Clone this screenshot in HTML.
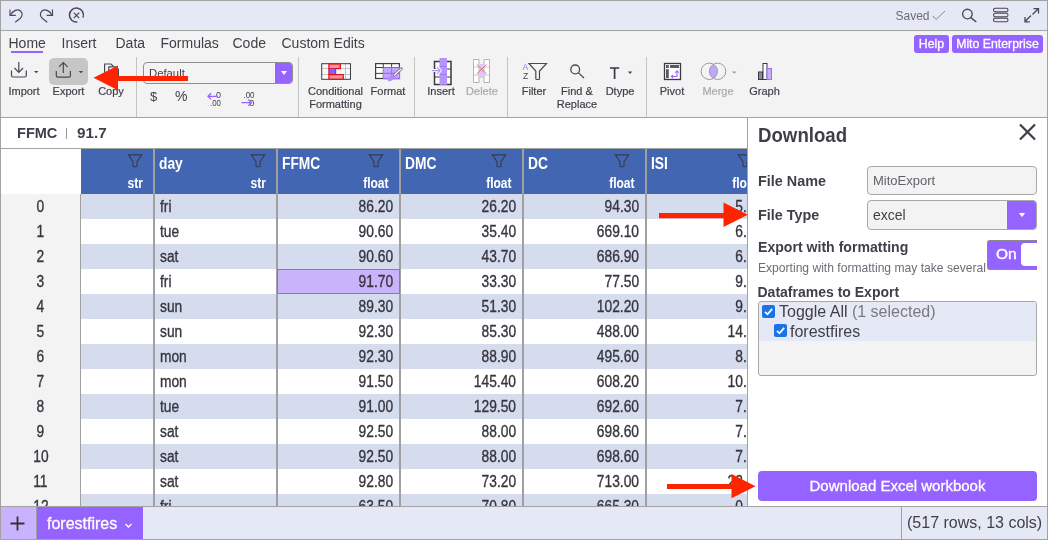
<!DOCTYPE html>
<html><head><meta charset="utf-8">
<style>
*{box-sizing:border-box;margin:0;padding:0}
html,body{width:1048px;height:540px;overflow:hidden;background:#fff;-webkit-font-smoothing:antialiased;font-family:"Liberation Sans",sans-serif;color:#403e48}
div,span,svg{position:absolute}
.t{white-space:nowrap;line-height:1}
.tab{top:36px;font-size:14px;color:#403e48}
.lbl{font-size:11px;color:#403e48;text-align:center;white-space:nowrap;line-height:13px;-webkit-text-stroke:0.2px}
.sep{top:57px;width:1px;height:60px;background:#c4c4c4}
.cell{height:25px;font-size:16px;line-height:25px;white-space:nowrap;overflow:hidden;-webkit-text-stroke:0.35px;color:#37353f}
.cond{display:inline-block;position:static;transform:scaleX(0.86);}
.r .cond{transform-origin:100% 50%}
.l .cond{transform-origin:0 50%}
</style></head>
<body>
<div style="left:0;top:0;width:1048px;height:540px;overflow:hidden;will-change:transform">

<div style="left:0;top:0;width:1048px;height:31px;background:#e5e8f5;border-bottom:1px solid #a2a2a2"></div>
<div style="left:0;top:31px;width:1048px;height:87px;background:#f3f3f3;border-bottom:1px solid #a2a2a2"></div>
<svg style="left:0;top:0" width="1048" height="30" viewBox="0 0 1048 30" fill="none" stroke="#4a4855" stroke-width="1.15" stroke-linecap="butt">
<path d="M10 9.5 V15.3 H15.8"/>
<path d="M10.5 15 C13 10.5 17.5 8.5 20.5 11 C23 13.2 22.5 16.2 20 18.5 L15.2 22.3"/>
<path d="M52.5 9.5 V15.3 H46.7"/>
<path d="M52 15 C49.5 10.5 45 8.5 42 11 C39.5 13.2 40 16.2 42.5 18.5 L47.3 22.3"/>
<path d="M77.3 22 A7 7 0 1 1 83 17.5" stroke-width="1.5"/>
<path d="M73.8 12.6 L79.2 18.2 M79.2 12.6 L73.8 18.2" stroke-width="1.2"/>
<path d="M933 16 L936 19.5 L945 11" stroke="#8a8890" stroke-width="1"/>
<circle cx="967.4" cy="14" r="4.8" stroke-width="1.35"/>
<path d="M970.8 17.6 L976.3 22" stroke-width="1.5"/>
<rect x="993.5" y="8.3" width="14.5" height="3.6" rx="1.8" stroke-width="1.1"/>
<rect x="993.5" y="13.2" width="14.5" height="3.6" rx="1.8" stroke-width="1.1"/>
<rect x="993.5" y="18.1" width="14.5" height="3.6" rx="1.8" stroke-width="1.1"/>
<path d="M1025 21.5 L1031 15.5 M1025 17 V21.8 H1029.8 M1038.5 8.5 L1032.5 14.5 M1033.5 8.6 H1038.5 V13.5" stroke-width="1.3"/>
</svg>
<div class="t" style="left:895.5px;top:9.5px;font-size:12px;color:#6e6c76">Saved</div>
<div class="t tab" style="left:8.5px">Home</div>
<div class="t tab" style="left:61.5px">Insert</div>
<div class="t tab" style="left:115.5px">Data</div>
<div class="t tab" style="left:160.5px">Formulas</div>
<div class="t tab" style="left:232.5px">Code</div>
<div class="t tab" style="left:281.5px">Custom Edits</div>
<div style="left:11px;top:51px;width:32px;height:2px;background:#9563ff"></div>
<div class="t" style="left:914px;top:35px;width:35px;height:18px;background:#9563ff;border-radius:3px;color:#fff;font-size:12.3px;line-height:18px;text-align:center;-webkit-text-stroke:0.3px">Help</div>
<div class="t" style="left:952px;top:35px;width:91px;height:18px;background:#9563ff;border-radius:3px;color:#fff;font-size:12.3px;line-height:18px;text-align:center;-webkit-text-stroke:0.3px">Mito Enterprise</div>
<div style="left:49px;top:58px;width:39px;height:27px;background:#c6c6c6;border-radius:5px"></div>
<div class="sep" style="left:136px"></div>
<div class="sep" style="left:298px"></div>
<div class="sep" style="left:414px"></div>
<div class="sep" style="left:507px"></div>
<div class="sep" style="left:646px"></div>
<div class="lbl" style="left:-21.0px;top:85px;width:90px">Import</div>
<div class="lbl" style="left:23.5px;top:85px;width:90px">Export</div>
<div class="lbl" style="left:66.0px;top:85px;width:90px">Copy</div>
<div class="lbl" style="left:290.5px;top:85px;width:90px">Conditional</div>
<div class="lbl" style="left:290.5px;top:97.8px;width:90px">Formatting</div>
<div class="lbl" style="left:343.0px;top:85px;width:90px">Format</div>
<div class="lbl" style="left:396.0px;top:85px;width:90px">Insert</div>
<div class="lbl" style="left:437.0px;top:85px;width:90px;color:#a9a9ae">Delete</div>
<div class="lbl" style="left:489.0px;top:85px;width:90px">Filter</div>
<div class="lbl" style="left:532.0px;top:85px;width:90px">Find &amp;</div>
<div class="lbl" style="left:532.0px;top:97.8px;width:90px">Replace</div>
<div class="lbl" style="left:575.0px;top:85px;width:90px">Dtype</div>
<div class="lbl" style="left:627.0px;top:85px;width:90px">Pivot</div>
<div class="lbl" style="left:673.0px;top:85px;width:90px;color:#a9a9ae">Merge</div>
<div class="lbl" style="left:719.5px;top:85px;width:90px">Graph</div>
<svg style="left:0;top:0" width="800" height="118" viewBox="0 0 800 118" fill="none">
<g stroke="#4a4855" stroke-width="1.2">
<path d="M11.5 70.5 V75.5 Q11.5 77 13 77 H24.8 Q26.3 77 26.3 75.5 V70.5"/>
<path d="M18.8 62 V72.5 M14.5 68 L18.8 72.5 L23.1 68"/>
<path d="M56.3 71 V75.8 Q56.3 77.2 57.8 77.2 H69 Q70.4 77.2 70.4 75.8 V71"/>
<path d="M63.3 62.5 V73 M59 66.8 L63.3 62.5 L67.6 66.8"/>
</g>
<g fill="#4a4855">
<path d="M34 71 H38.5 L36.25 73.3 Z"/>
<path d="M78.7 71 H83.2 L80.95 73.3 Z"/>
<path d="M732 71.5 H736.5 L734.25 73.8 Z" fill="#9b9ba0"/>
<path d="M627.8 71.6 H632.3 L630.05 73.9 Z"/>
</g>
<!-- copy icon -->
<g stroke="#4a4855" stroke-width="1.2">
<path d="M104.6 75 V64 H111 L113.5 66.5"/>
<path d="M108.8 78 V66.8 H116 L118.4 69.2 V78"/>
</g>
<!-- number format row -->
<!-- cond formatting -->
<g>
<rect x="321.8" y="63.8" width="28.6" height="15.4" fill="#f8f8f8"/>
<path d="M321.8 68.5 H350.4 M321.8 74.5 H350.4 M345.5 63.8 V79.2" stroke="#bdbdbd" stroke-width="0.9"/>
<rect x="321.7" y="63.7" width="28.8" height="15.6" fill="none" stroke="#3f3d48" stroke-width="1"/>
<rect x="328.9" y="64" width="11.5" height="4.6" fill="#f0959c" stroke="#e00c14" stroke-width="1.15"/>
<rect x="328.9" y="68.6" width="6.8" height="5.8" fill="#8d5bff"/>
<path d="M335.7 68.6 V74.4" stroke="#5a30d8" stroke-width="1"/>
<path d="M328.9 68.6 V74.4" stroke="#e00c14" stroke-width="1.15"/>
<rect x="328.9" y="74.6" width="14.4" height="4.6" fill="#f0959c" stroke="#e00c14" stroke-width="1.15"/>
</g>
<!-- format icon -->
<g>
<rect x="375.6" y="63.6" width="23.8" height="14.8" fill="#fff"/>
<path d="M375.6 67.5 H399.5 M375.6 73.4 H383.3 M383.3 63.6 V78.5 M391.6 63.6 V67.5" stroke="#3f3d48" stroke-width="1"/>
<rect x="375.6" y="63.6" width="23.8" height="14.9" fill="none" stroke="#3f3d48" stroke-width="1.2"/>
<rect x="383.3" y="67.5" width="16.6" height="11.3" fill="#c3a6fb"/>
<path d="M383.3 73.4 H399.8 M391.6 67.5 V78.8 M399.6 67.5 V78.6 H383.3" stroke="#9d6cff" stroke-width="1.1"/>
<ellipse cx="391" cy="78.3" rx="3.7" ry="2.3" fill="#b18dfb" transform="rotate(-30 391 78.3)"/>
<path d="M394.3 75.3 L401.3 68.8" stroke="#6a6870" stroke-width="2.8" stroke-linecap="round"/>
<path d="M394.3 75.3 L401.3 68.8" stroke="#fff" stroke-width="1.2" stroke-linecap="round"/>
</g>
<!-- insert -->
<g>
<rect x="434.5" y="61.5" width="16.5" height="23" fill="#fff" stroke="#3a3844" stroke-width="1.5"/>
<path d="M434.5 69 H451 M434.5 77 H451" stroke="#3a3844" stroke-width="1"/>
<rect x="439.5" y="58" width="7.5" height="26.8" fill="#b496fb"/>
<path d="M439.5 66.5 H447 M439.5 74.5 H447" stroke="#9d74f8" stroke-width="0.8"/>
<path d="M432 70.6 H440 M437.2 67.6 L440.2 70.6 L437.2 73.6" stroke="#fff" stroke-width="3" stroke-linecap="round" stroke-linejoin="round"/>
<path d="M432 70.6 H440 M437.2 67.6 L440.2 70.6 L437.2 73.6" stroke="#b08cfa" stroke-width="1.2" stroke-linecap="round" stroke-linejoin="round"/>
</g>
<!-- delete -->
<g>
<path d="M473.5 59.5 H479 V82.5 H473.5 Z M484 59.5 H489.5 V82.5 H484 Z" fill="#fff" stroke="#b4b4b4" stroke-width="1"/>
<path d="M473.5 67 H479 M473.5 75 H479 M484 67 H489.5 M484 75 H489.5" stroke="#c0c0c0" stroke-width="0.8"/>
<rect x="478.8" y="64" width="5.4" height="14" fill="#d9c8fb"/>
<path d="M476.8 64.5 L486.5 74 M486.5 64.5 L476.8 74" stroke="#e07070" stroke-width="1"/>
</g>
<!-- filter -->
<text x="522.5" y="70" font-family="Liberation Sans" font-size="8.5" fill="#9d6cff">A</text>
<text x="523" y="78.8" font-family="Liberation Sans" font-size="8.5" fill="#4a4855">Z</text>
<path d="M529 63.5 H546.5 L539.5 71 V78.5 Q539.5 79.5 538.5 79.5 H536.8 Q535.8 79.5 535.8 78.5 V71 Z" stroke="#4a4855" stroke-width="1.2" fill="none"/>
<!-- search -->
<circle cx="575.2" cy="69.4" r="4.4" stroke="#4a4855" stroke-width="1.3"/>
<path d="M578.3 72.6 L584 78" stroke="#4a4855" stroke-width="1.3"/>
<!-- T -->
<path d="M610 68 H619.2 M614.6 68 V79" stroke="#3a3844" stroke-width="1.7"/>
<!-- pivot -->
<rect x="664.5" y="63.5" width="16" height="16" fill="#fff" stroke="#3a3844" stroke-width="1.3"/>
<rect x="666" y="65" width="2.8" height="3" fill="#5b5966"/>
<rect x="670" y="65" width="9" height="3" fill="#5b5966"/>
<rect x="666" y="69.2" width="2.8" height="9" fill="#5b5966"/>
<path d="M671.5 76.5 H677 V71 M675.3 72.6 L677 70.8 L678.7 72.6 M673.1 74.8 L671.3 76.5 L673.1 78.2" stroke="#9d6cff" stroke-width="1.1"/>
<!-- merge -->
<path d="M713.45 64.23 A8.2 8.2 0 0 1 713.45 78.37 A8.2 8.2 0 0 1 713.45 64.23 Z" fill="#c0a8f6"/>
<circle cx="709.3" cy="71.3" r="8.2" stroke="#9b9ba0" stroke-width="1"/>
<circle cx="717.6" cy="71.3" r="8.2" stroke="#9b9ba0" stroke-width="1"/>
<!-- graph -->
<rect x="758.5" y="72" width="4" height="7.5" fill="#8e8c96" stroke="#3a3844" stroke-width="1"/>
<rect x="763" y="63.5" width="4" height="16" fill="#fff" stroke="#3a3844" stroke-width="1"/>
<rect x="767" y="68.5" width="4.5" height="11" fill="#c6aefa" stroke="#9d6cff" stroke-width="1"/>
</svg>
<div style="left:143px;top:62px;width:150px;height:22px;border:1px solid #8f8f8f;border-radius:4px;background:#f3f3f3;overflow:hidden"><div style="right:-1px;top:-1px;width:18px;height:22px;background:#9563ff"></div></div>
<div class="t" style="left:149px;top:67.5px;font-size:11.3px;color:#403e48">Default</div>
<svg style="left:0;top:0" width="300" height="118"><path d="M281 71 H287 L284 75 Z" fill="#fff"/></svg>
<div class="t" style="left:150px;top:90px;font-size:13px;color:#403e48">$</div>
<div class="t" style="left:175px;top:89px;font-size:14px;color:#403e48">%</div>
<svg style="left:0;top:0" width="300" height="118" font-family="Liberation Sans">
<text x="216" y="97.8" font-size="9.5" fill="#403e48" textLength="5" lengthAdjust="spacingAndGlyphs">0</text>
<text x="210" y="106.2" font-size="9.5" fill="#403e48" textLength="11" lengthAdjust="spacingAndGlyphs">.00</text>
<path d="M208 96.3 H217.5 M211.2 93.2 L208 96.3 L211.2 99.4" stroke="#9563ff" stroke-width="1.3" fill="none"/>
<text x="243.5" y="97.8" font-size="9.5" fill="#403e48" textLength="11" lengthAdjust="spacingAndGlyphs">.00</text>
<text x="249.2" y="106.2" font-size="9.5" fill="#403e48" textLength="5" lengthAdjust="spacingAndGlyphs">0</text>
<path d="M241.5 102.6 H251.5 M248.3 99.5 L251.5 102.6 L248.3 105.7" stroke="#9563ff" stroke-width="1.3" fill="none"/>
</svg>
<div style="left:0;top:118px;width:748px;height:31px;background:#fff;border-bottom:1px solid #a2a2a2"></div>
<div class="t" style="left:16.5px;top:124.8px;font-size:15.3px;font-weight:bold;color:#403e48;transform:scaleX(0.95);transform-origin:0 0">FFMC</div>
<div style="left:66px;top:128px;width:1px;height:11px;background:#9a9a9a"></div>
<div class="t" style="left:77px;top:124.8px;font-size:15.3px;font-weight:bold;color:#403e48">91.7</div>
<div style="left:0;top:149px;width:748px;height:357px;overflow:hidden;background:#fff">
<div style="left:0;top:45px;width:81px;height:320px;background:#f3f3f3;border-right:1px solid #a0a0a0"></div>
<div style="left:81px;top:0;width:700px;height:45px;background:#4366b3"></div>
<div class="t" style="left:85px;top:7px;font-size:16px;font-weight:bold;color:#fff"><span class="cond" style="transform-origin:0 50%"></span></div>
<div class="t" style="left:93px;top:26.5px;width:50px;text-align:right;font-size:14px;font-weight:bold;color:#fff"><span class="cond" style="transform-origin:100% 50%">str</span></div>
<svg style="left:127px;top:5px" width="16" height="15" viewBox="0 0 16 15" fill="none"><path d="M1.3 0.9 H14.7 L10 7.6 V12.3 Q10 12.8 9.5 12.8 H6.5 Q6 12.8 6 12.3 V7.6 Z" stroke="#363a4a" stroke-width="1.1"/></svg>
<div class="t" style="left:159px;top:7px;font-size:16px;font-weight:bold;color:#fff"><span class="cond" style="transform-origin:0 50%">day</span></div>
<div class="t" style="left:216px;top:26.5px;width:50px;text-align:right;font-size:14px;font-weight:bold;color:#fff"><span class="cond" style="transform-origin:100% 50%">str</span></div>
<svg style="left:250px;top:5px" width="16" height="15" viewBox="0 0 16 15" fill="none"><path d="M1.3 0.9 H14.7 L10 7.6 V12.3 Q10 12.8 9.5 12.8 H6.5 Q6 12.8 6 12.3 V7.6 Z" stroke="#363a4a" stroke-width="1.1"/></svg>
<div class="t" style="left:282px;top:7px;font-size:16px;font-weight:bold;color:#fff"><span class="cond" style="transform-origin:0 50%">FFMC</span></div>
<div class="t" style="left:339px;top:26.5px;width:50px;text-align:right;font-size:14px;font-weight:bold;color:#fff"><span class="cond" style="transform-origin:100% 50%">float</span></div>
<svg style="left:368px;top:5px" width="16" height="15" viewBox="0 0 16 15" fill="none"><path d="M1.3 0.9 H14.7 L10 7.6 V12.3 Q10 12.8 9.5 12.8 H6.5 Q6 12.8 6 12.3 V7.6 Z" stroke="#363a4a" stroke-width="1.1"/></svg>
<div class="t" style="left:405px;top:7px;font-size:16px;font-weight:bold;color:#fff"><span class="cond" style="transform-origin:0 50%">DMC</span></div>
<div class="t" style="left:462px;top:26.5px;width:50px;text-align:right;font-size:14px;font-weight:bold;color:#fff"><span class="cond" style="transform-origin:100% 50%">float</span></div>
<svg style="left:491px;top:5px" width="16" height="15" viewBox="0 0 16 15" fill="none"><path d="M1.3 0.9 H14.7 L10 7.6 V12.3 Q10 12.8 9.5 12.8 H6.5 Q6 12.8 6 12.3 V7.6 Z" stroke="#363a4a" stroke-width="1.1"/></svg>
<div class="t" style="left:528px;top:7px;font-size:16px;font-weight:bold;color:#fff"><span class="cond" style="transform-origin:0 50%">DC</span></div>
<div class="t" style="left:585px;top:26.5px;width:50px;text-align:right;font-size:14px;font-weight:bold;color:#fff"><span class="cond" style="transform-origin:100% 50%">float</span></div>
<svg style="left:614px;top:5px" width="16" height="15" viewBox="0 0 16 15" fill="none"><path d="M1.3 0.9 H14.7 L10 7.6 V12.3 Q10 12.8 9.5 12.8 H6.5 Q6 12.8 6 12.3 V7.6 Z" stroke="#363a4a" stroke-width="1.1"/></svg>
<div class="t" style="left:651px;top:7px;font-size:16px;font-weight:bold;color:#fff"><span class="cond" style="transform-origin:0 50%">ISI</span></div>
<div class="t" style="left:708px;top:26.5px;width:50px;text-align:right;font-size:14px;font-weight:bold;color:#fff"><span class="cond" style="transform-origin:100% 50%">float</span></div>
<svg style="left:737px;top:5px" width="16" height="15" viewBox="0 0 16 15" fill="none"><path d="M1.3 0.9 H14.7 L10 7.6 V12.3 Q10 12.8 9.5 12.8 H6.5 Q6 12.8 6 12.3 V7.6 Z" stroke="#363a4a" stroke-width="1.1"/></svg>
<div style="left:81px;top:45px;width:700px;height:25px;background:#d5dcee"></div>
<div class="cell" style="left:0;top:45px;width:81px;text-align:center;font-size:16px"><span class="cond" style="transform-origin:50% 50%">0</span></div>
<div class="cell l" style="left:160px;top:45px"><span class="cond">fri</span></div>
<div class="cell r" style="left:278px;top:45px;width:115px;text-align:right"><span class="cond">86.20</span></div>
<div class="cell r" style="left:401px;top:45px;width:115px;text-align:right"><span class="cond">26.20</span></div>
<div class="cell r" style="left:524px;top:45px;width:115px;text-align:right"><span class="cond">94.30</span></div>
<div class="cell r" style="left:647px;top:45px;width:115px;text-align:right"><span class="cond">5.10</span></div>
<div style="left:81px;top:70px;width:700px;height:25px;background:#fff"></div>
<div class="cell" style="left:0;top:70px;width:81px;text-align:center;font-size:16px"><span class="cond" style="transform-origin:50% 50%">1</span></div>
<div class="cell l" style="left:160px;top:70px"><span class="cond">tue</span></div>
<div class="cell r" style="left:278px;top:70px;width:115px;text-align:right"><span class="cond">90.60</span></div>
<div class="cell r" style="left:401px;top:70px;width:115px;text-align:right"><span class="cond">35.40</span></div>
<div class="cell r" style="left:524px;top:70px;width:115px;text-align:right"><span class="cond">669.10</span></div>
<div class="cell r" style="left:647px;top:70px;width:115px;text-align:right"><span class="cond">6.70</span></div>
<div style="left:81px;top:95px;width:700px;height:25px;background:#d5dcee"></div>
<div class="cell" style="left:0;top:95px;width:81px;text-align:center;font-size:16px"><span class="cond" style="transform-origin:50% 50%">2</span></div>
<div class="cell l" style="left:160px;top:95px"><span class="cond">sat</span></div>
<div class="cell r" style="left:278px;top:95px;width:115px;text-align:right"><span class="cond">90.60</span></div>
<div class="cell r" style="left:401px;top:95px;width:115px;text-align:right"><span class="cond">43.70</span></div>
<div class="cell r" style="left:524px;top:95px;width:115px;text-align:right"><span class="cond">686.90</span></div>
<div class="cell r" style="left:647px;top:95px;width:115px;text-align:right"><span class="cond">6.70</span></div>
<div style="left:81px;top:120px;width:700px;height:25px;background:#fff"></div>
<div class="cell" style="left:0;top:120px;width:81px;text-align:center;font-size:16px"><span class="cond" style="transform-origin:50% 50%">3</span></div>
<div class="cell l" style="left:160px;top:120px"><span class="cond">fri</span></div>
<div class="cell r" style="left:278px;top:120px;width:115px;text-align:right"><span class="cond">91.70</span></div>
<div class="cell r" style="left:401px;top:120px;width:115px;text-align:right"><span class="cond">33.30</span></div>
<div class="cell r" style="left:524px;top:120px;width:115px;text-align:right"><span class="cond">77.50</span></div>
<div class="cell r" style="left:647px;top:120px;width:115px;text-align:right"><span class="cond">9.00</span></div>
<div style="left:81px;top:145px;width:700px;height:25px;background:#d5dcee"></div>
<div class="cell" style="left:0;top:145px;width:81px;text-align:center;font-size:16px"><span class="cond" style="transform-origin:50% 50%">4</span></div>
<div class="cell l" style="left:160px;top:145px"><span class="cond">sun</span></div>
<div class="cell r" style="left:278px;top:145px;width:115px;text-align:right"><span class="cond">89.30</span></div>
<div class="cell r" style="left:401px;top:145px;width:115px;text-align:right"><span class="cond">51.30</span></div>
<div class="cell r" style="left:524px;top:145px;width:115px;text-align:right"><span class="cond">102.20</span></div>
<div class="cell r" style="left:647px;top:145px;width:115px;text-align:right"><span class="cond">9.60</span></div>
<div style="left:81px;top:170px;width:700px;height:25px;background:#fff"></div>
<div class="cell" style="left:0;top:170px;width:81px;text-align:center;font-size:16px"><span class="cond" style="transform-origin:50% 50%">5</span></div>
<div class="cell l" style="left:160px;top:170px"><span class="cond">sun</span></div>
<div class="cell r" style="left:278px;top:170px;width:115px;text-align:right"><span class="cond">92.30</span></div>
<div class="cell r" style="left:401px;top:170px;width:115px;text-align:right"><span class="cond">85.30</span></div>
<div class="cell r" style="left:524px;top:170px;width:115px;text-align:right"><span class="cond">488.00</span></div>
<div class="cell r" style="left:647px;top:170px;width:115px;text-align:right"><span class="cond">14.70</span></div>
<div style="left:81px;top:195px;width:700px;height:25px;background:#d5dcee"></div>
<div class="cell" style="left:0;top:195px;width:81px;text-align:center;font-size:16px"><span class="cond" style="transform-origin:50% 50%">6</span></div>
<div class="cell l" style="left:160px;top:195px"><span class="cond">mon</span></div>
<div class="cell r" style="left:278px;top:195px;width:115px;text-align:right"><span class="cond">92.30</span></div>
<div class="cell r" style="left:401px;top:195px;width:115px;text-align:right"><span class="cond">88.90</span></div>
<div class="cell r" style="left:524px;top:195px;width:115px;text-align:right"><span class="cond">495.60</span></div>
<div class="cell r" style="left:647px;top:195px;width:115px;text-align:right"><span class="cond">8.50</span></div>
<div style="left:81px;top:220px;width:700px;height:25px;background:#fff"></div>
<div class="cell" style="left:0;top:220px;width:81px;text-align:center;font-size:16px"><span class="cond" style="transform-origin:50% 50%">7</span></div>
<div class="cell l" style="left:160px;top:220px"><span class="cond">mon</span></div>
<div class="cell r" style="left:278px;top:220px;width:115px;text-align:right"><span class="cond">91.50</span></div>
<div class="cell r" style="left:401px;top:220px;width:115px;text-align:right"><span class="cond">145.40</span></div>
<div class="cell r" style="left:524px;top:220px;width:115px;text-align:right"><span class="cond">608.20</span></div>
<div class="cell r" style="left:647px;top:220px;width:115px;text-align:right"><span class="cond">10.70</span></div>
<div style="left:81px;top:245px;width:700px;height:25px;background:#d5dcee"></div>
<div class="cell" style="left:0;top:245px;width:81px;text-align:center;font-size:16px"><span class="cond" style="transform-origin:50% 50%">8</span></div>
<div class="cell l" style="left:160px;top:245px"><span class="cond">tue</span></div>
<div class="cell r" style="left:278px;top:245px;width:115px;text-align:right"><span class="cond">91.00</span></div>
<div class="cell r" style="left:401px;top:245px;width:115px;text-align:right"><span class="cond">129.50</span></div>
<div class="cell r" style="left:524px;top:245px;width:115px;text-align:right"><span class="cond">692.60</span></div>
<div class="cell r" style="left:647px;top:245px;width:115px;text-align:right"><span class="cond">7.00</span></div>
<div style="left:81px;top:270px;width:700px;height:25px;background:#fff"></div>
<div class="cell" style="left:0;top:270px;width:81px;text-align:center;font-size:16px"><span class="cond" style="transform-origin:50% 50%">9</span></div>
<div class="cell l" style="left:160px;top:270px"><span class="cond">sat</span></div>
<div class="cell r" style="left:278px;top:270px;width:115px;text-align:right"><span class="cond">92.50</span></div>
<div class="cell r" style="left:401px;top:270px;width:115px;text-align:right"><span class="cond">88.00</span></div>
<div class="cell r" style="left:524px;top:270px;width:115px;text-align:right"><span class="cond">698.60</span></div>
<div class="cell r" style="left:647px;top:270px;width:115px;text-align:right"><span class="cond">7.10</span></div>
<div style="left:81px;top:295px;width:700px;height:25px;background:#d5dcee"></div>
<div class="cell" style="left:0;top:295px;width:81px;text-align:center;font-size:16px"><span class="cond" style="transform-origin:50% 50%">10</span></div>
<div class="cell l" style="left:160px;top:295px"><span class="cond">sat</span></div>
<div class="cell r" style="left:278px;top:295px;width:115px;text-align:right"><span class="cond">92.50</span></div>
<div class="cell r" style="left:401px;top:295px;width:115px;text-align:right"><span class="cond">88.00</span></div>
<div class="cell r" style="left:524px;top:295px;width:115px;text-align:right"><span class="cond">698.60</span></div>
<div class="cell r" style="left:647px;top:295px;width:115px;text-align:right"><span class="cond">7.10</span></div>
<div style="left:81px;top:320px;width:700px;height:25px;background:#fff"></div>
<div class="cell" style="left:0;top:320px;width:81px;text-align:center;font-size:16px"><span class="cond" style="transform-origin:50% 50%">11</span></div>
<div class="cell l" style="left:160px;top:320px"><span class="cond">sat</span></div>
<div class="cell r" style="left:278px;top:320px;width:115px;text-align:right"><span class="cond">92.80</span></div>
<div class="cell r" style="left:401px;top:320px;width:115px;text-align:right"><span class="cond">73.20</span></div>
<div class="cell r" style="left:524px;top:320px;width:115px;text-align:right"><span class="cond">713.00</span></div>
<div class="cell r" style="left:647px;top:320px;width:115px;text-align:right"><span class="cond">22.60</span></div>
<div style="left:81px;top:345px;width:700px;height:25px;background:#d5dcee"></div>
<div class="cell" style="left:0;top:345px;width:81px;text-align:center;font-size:16px"><span class="cond" style="transform-origin:50% 50%">12</span></div>
<div class="cell l" style="left:160px;top:345px"><span class="cond">fri</span></div>
<div class="cell r" style="left:278px;top:345px;width:115px;text-align:right"><span class="cond">63.50</span></div>
<div class="cell r" style="left:401px;top:345px;width:115px;text-align:right"><span class="cond">70.80</span></div>
<div class="cell r" style="left:524px;top:345px;width:115px;text-align:right"><span class="cond">665.30</span></div>
<div class="cell r" style="left:647px;top:345px;width:115px;text-align:right"><span class="cond">0.80</span></div>
<div style="left:153px;top:0;width:2px;height:357px;background:#a0a0a0"></div>
<div style="left:276px;top:0;width:2px;height:357px;background:#a0a0a0"></div>
<div style="left:399px;top:0;width:2px;height:357px;background:#a0a0a0"></div>
<div style="left:522px;top:0;width:2px;height:357px;background:#a0a0a0"></div>
<div style="left:645px;top:0;width:2px;height:357px;background:#a0a0a0"></div>
<div style="left:277px;top:120px;width:123px;height:25px;background:#c9b3fb;border:1px solid #9563ff"></div>
<div class="cell r" style="left:278px;top:120px;width:115px;text-align:right"><span class="cond">91.70</span></div>
</div>
<div style="left:747px;top:118px;width:301px;height:388px;background:#fff;border-left:1px solid #a2a2a2"></div>
<div class="t" style="left:757.6px;top:124.5px;font-size:20.5px;font-weight:bold;color:#403e48;transform:scaleX(0.91);transform-origin:0 0">Download</div>
<svg style="left:1018px;top:123px" width="19" height="18"><path d="M2 1.5 L17 16.5 M17 1.5 L2 16.5" stroke="#403e48" stroke-width="2.2"/></svg>
<div class="t" style="left:757.7px;top:173px;font-size:15.3px;font-weight:bold;color:#403e48;transform:scaleX(0.94);transform-origin:0 0">File Name</div>
<div class="t" style="left:757.7px;top:207px;font-size:15.3px;font-weight:bold;color:#403e48;transform:scaleX(0.94);transform-origin:0 0">File Type</div>
<div style="left:867px;top:166px;width:170px;height:29px;background:#f3f3f3;border:1px solid #a8a8a8;border-radius:4px"></div>
<div class="t" style="left:873px;top:174px;font-size:13px;color:#63616b">MitoExport</div>
<div style="left:867px;top:200px;width:170px;height:30px;background:#f3f3f3;border:1px solid #a8a8a8;border-radius:4px;overflow:hidden"><div style="right:-1px;top:-1px;width:30px;height:30px;background:#9563ff"></div></div>
<div class="t" style="left:873px;top:208px;font-size:14px;color:#403e48">excel</div>
<svg style="left:1015px;top:210px" width="14" height="10"><path d="M3.8 3 H10.2 L7 6.9 Z" fill="#fff"/></svg>
<div class="t" style="left:758px;top:240px;font-size:14.1px;font-weight:bold;color:#403e48">Export with formatting</div>
<div class="t" style="left:758px;top:262px;font-size:12.1px;color:#6e6c76">Exporting with formatting may take several</div>
<div style="left:987px;top:240px;width:60px;height:30px;background:#9563ff;border:1px solid #8a8a8a;border-right:none;border-radius:3px;overflow:hidden"><div style="left:33px;top:2px;width:30px;height:23px;background:#fff;border-radius:4px"></div></div>
<div class="t" style="left:996px;top:246.2px;font-size:15.5px;color:#fff;-webkit-text-stroke:0.35px">On</div>
<div style="left:1037px;top:230px;width:11px;height:50px;background:#fff"></div>
<div class="t" style="left:757.5px;top:285px;font-size:14px;font-weight:bold;color:#403e48">Dataframes to Export</div>
<div style="left:758px;top:301px;width:279px;height:75px;background:#f3f3f3;border:1px solid #a8a8a8;border-radius:3px;overflow:hidden"><div style="left:0;top:0;width:279px;height:39px;background:#e5e8f5"></div></div>
<svg style="left:762px;top:305px" width="13" height="13"><rect x="0" y="0" width="13" height="13" rx="2" fill="#1a73e8"/><path d="M3 6.8 L5.5 9.3 L10.2 3.8" stroke="#fff" stroke-width="1.8" fill="none"/></svg>
<svg style="left:774px;top:324px" width="13" height="13"><rect x="0" y="0" width="13" height="13" rx="2" fill="#1a73e8"/><path d="M3 6.8 L5.5 9.3 L10.2 3.8" stroke="#fff" stroke-width="1.8" fill="none"/></svg>
<div class="t" style="left:779px;top:304px;font-size:16px;color:#403e48">Toggle All <span style="position:static;color:#7a7882">(1 selected)</span></div>
<div class="t" style="left:790px;top:324px;font-size:16px;color:#403e48">forestfires</div>
<div class="t" style="left:758px;top:471px;width:279px;height:30px;background:#9563ff;border-radius:4px;color:#fff;font-size:15px;line-height:30px;text-align:center;-webkit-text-stroke:0.3px">Download Excel workbook</div>
<div style="left:0;top:506px;width:1048px;height:34px;background:#e5e8f5;border-top:1px solid #a2a2a2"></div>
<div style="left:0;top:507px;width:37px;height:33px;background:#c9b3ff;border-right:1px solid #a0a0a0"></div>
<svg style="left:0;top:507px" width="37" height="33"><path d="M10.5 16.5 H24.5 M17.5 9.5 V23.5" stroke="#333" stroke-width="1.8"/></svg>
<div style="left:37px;top:507px;width:106px;height:33px;background:#9563ff"></div>
<div class="t" style="left:47px;top:515.7px;font-size:16px;color:#fff;-webkit-text-stroke:0.3px">forestfires</div>
<svg style="left:120px;top:518px" width="14" height="14"><path d="M5.5 6 L8.5 9 L11.5 6" stroke="#fff" stroke-width="1.4" fill="none"/></svg>
<div style="left:901px;top:507px;width:1px;height:33px;background:#a0a0a0"></div>
<div class="t" style="left:907px;top:515px;font-size:16px;color:#403e48">(517 rows, 13 cols)</div>
<div style="left:0;top:0;width:1048px;height:540px;border:1px solid #a2a2a2"></div>
<svg style="left:0;top:0" width="1048" height="540">
<path d="M118 76 H188 V81 H118 Z M93.5 77.8 L118 65.5 V90.2 Z" fill="#ff2400"/>
<path d="M659 213 H723.5 V218.2 H659 Z M747.8 214.8 L723.5 202.6 V227 Z" fill="#ff2400"/>
<path d="M667 484 H731.5 V489 H667 Z M755.5 486.2 L731.5 474 V498.2 Z" fill="#ff2400"/>
</svg>
</div></body></html>
